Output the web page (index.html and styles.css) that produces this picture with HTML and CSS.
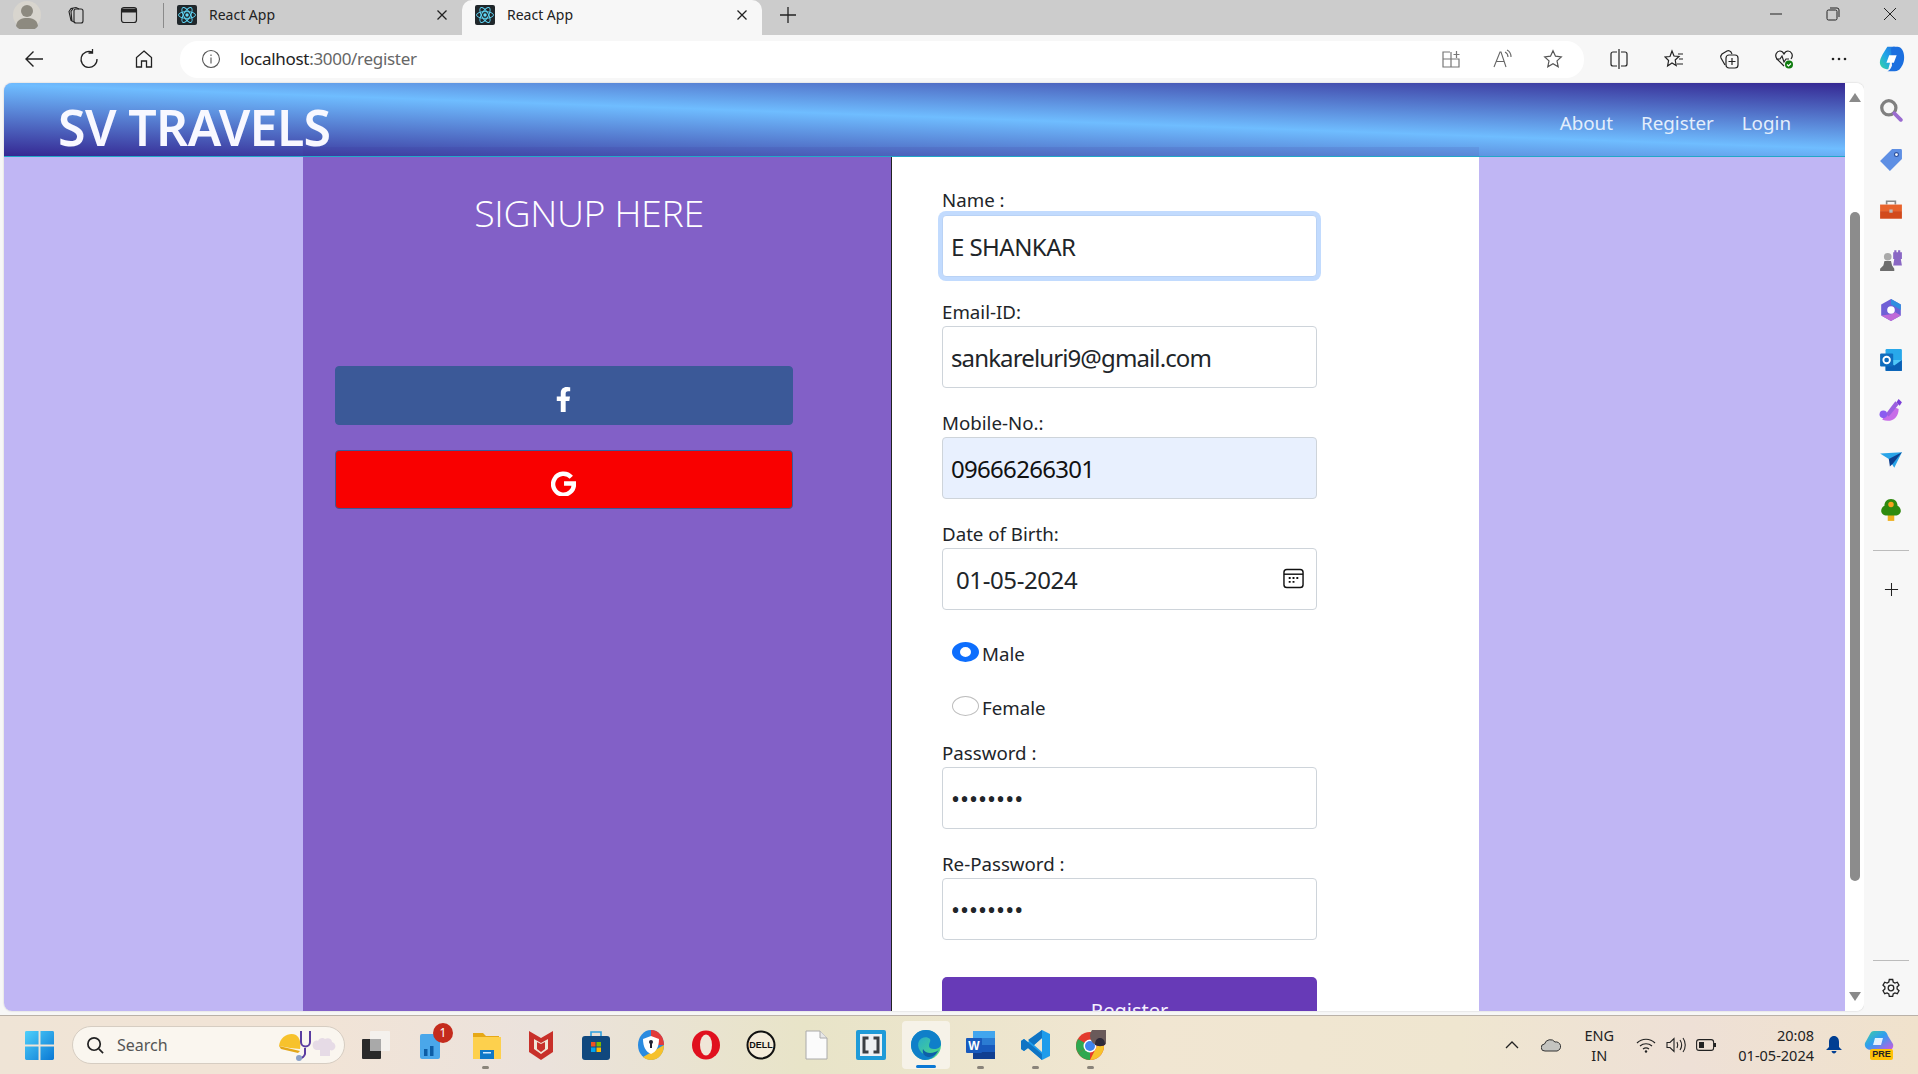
FILE: index.html
```html
<!DOCTYPE html>
<html lang="en">
<head>
<meta charset="utf-8">
<title>React App</title>
<link rel="stylesheet" href="styles.css">
</head>
<body>
<div class="screen">
  <div class="tabbar">
    <div class="tb-left">
      <svg class="avatar" viewBox="0 0 28 28"><circle cx="14" cy="14" r="14" fill="#d8d5ce"/><circle cx="14" cy="10" r="6" fill="#8d8a80"/><path d="M3 25c1-7 6-8 11-8s10 1 11 8a14 14 0 0 1-22 0z" fill="#8d8a80"/></svg>
      <svg class="ic20 tb-i1" viewBox="0 0 20 20" fill="none" stroke="#222" stroke-width="1.100"><rect x="8" y="4" width="9" height="14" rx="2"/><path d="M8 17l-3-1.500-2-9 2-3 5-1 3 1.500M6 16.500l-1-10 2-3"/></svg>
      <svg class="ic20 tb-i2" viewBox="0 0 20 20" fill="none" stroke="#222" stroke-width="1.200"><rect x="2.500" y="2.500" width="15" height="15" rx="2.500"/><path d="M3 4h14v3H3z" fill="#222"/></svg>
      <span class="tb-sep"></span>
    </div>
    <div class="tab">
      <svg class="favicon" viewBox="0 0 20 20"><rect width="20" height="20" rx="2" fill="#20272b"/><g fill="none" stroke="#61dafb" stroke-width=".9"><ellipse cx="10" cy="10" rx="8.500" ry="3.400"/><ellipse cx="10" cy="10" rx="8.500" ry="3.400" transform="rotate(60 10 10)"/><ellipse cx="10" cy="10" rx="8.500" ry="3.400" transform="rotate(120 10 10)"/></g><circle cx="10" cy="10" r="1.700" fill="#61dafb"/></svg>
      <span class="tab-title">React App</span>
      <svg class="tab-x" viewBox="0 0 12 12" stroke="#222" stroke-width="1.300"><path d="M1.500 1.500l9 9M10.500 1.500l-9 9"/></svg>
    </div>
    <div class="tab tab-active">
      <svg class="favicon" viewBox="0 0 20 20"><rect width="20" height="20" rx="2" fill="#20272b"/><g fill="none" stroke="#61dafb" stroke-width=".9"><ellipse cx="10" cy="10" rx="8.500" ry="3.400"/><ellipse cx="10" cy="10" rx="8.500" ry="3.400" transform="rotate(60 10 10)"/><ellipse cx="10" cy="10" rx="8.500" ry="3.400" transform="rotate(120 10 10)"/></g><circle cx="10" cy="10" r="1.700" fill="#61dafb"/></svg>
      <span class="tab-title">React App</span>
      <svg class="tab-x" viewBox="0 0 12 12" stroke="#222" stroke-width="1.300"><path d="M1.500 1.500l9 9M10.500 1.500l-9 9"/></svg>
    </div>
    <svg class="newtab" viewBox="0 0 18 18" stroke="#222" stroke-width="1.300"><path d="M9 1v16M1 9h16"/></svg>
    <div class="winctl">
      <svg class="ic14" viewBox="0 0 14 14" stroke="#222" stroke-width="1"><path d="M1 7h12"/></svg>
      <svg class="ic14" viewBox="0 0 14 14" fill="none" stroke="#222" stroke-width="1"><rect x="1" y="3" width="10" height="10" rx="1.500"/><path d="M4 1h7a2 2 0 0 1 2 2v7"/></svg>
      <svg class="ic14" viewBox="0 0 14 14" stroke="#222" stroke-width="1"><path d="M1 1l12 12M13 1L1 13"/></svg>
    </div>
  </div>

  <div class="toolbar">
    <div class="nav-btns">
      <svg class="ic20" viewBox="0 0 20 20" fill="none" stroke="#222" stroke-width="1.400"><path d="M19 10H2M9.500 2.500L2 10l7.500 7.500"/></svg>
      <svg class="ic20" viewBox="0 0 20 20" fill="none" stroke="#222" stroke-width="1.300"><path d="M13.500 3.200A8 8 0 1 0 18 10M13.500 0v4h-4"/></svg>
      <svg class="ic20" viewBox="0 0 20 20" fill="none" stroke="#222" stroke-width="1.300"><path d="M10 2l7.500 6.500V18h-5v-6h-5v6h-5V8.500z"/></svg>
    </div>
    <div class="addr">
      <svg class="ic20 addr-info" viewBox="0 0 20 20" fill="none" stroke="#555" stroke-width="1.100"><circle cx="10" cy="10" r="8.500"/><path d="M10 8.500v6M10 5.500v1.500"/></svg>
      <span class="url"><span class="url-host">localhost</span>:3000/register</span>
      <div class="addr-right">
        <svg class="ic20" viewBox="0 0 20 20" fill="none" stroke="#777" stroke-width="1.200"><path d="M9 3H2v15h16v-8H2M10 10v8M10 3v7M12.500 5.500h6M15.500 2v7"/></svg>
        <svg class="ic20" viewBox="0 0 20 20" fill="none" stroke="#666" stroke-width="1.100"><path d="M2 18L8 3h1l5 15M4.500 12.500h8M13 3c2 1 3 2.500 3 5M15 1c3 1.500 4 4 4 7"/></svg>
        <svg class="ic20" viewBox="0 0 20 20" fill="none" stroke="#555" stroke-width="1.200"><path d="M10 1.800l2.500 5.400 5.800.7-4.300 4 1.200 5.800-5.200-3-5.200 3L6 11.900l-4.300-4 5.800-.7z"/></svg>
      </div>
    </div>
    <div class="tools">
      <svg class="ic20" viewBox="0 0 20 20" fill="none" stroke="#222" stroke-width="1.200"><path d="M8 3H4a2 2 0 0 0-2 2v10a2 2 0 0 0 2 2h4M12 3h4a2 2 0 0 1 2 2v10a2 2 0 0 1-2 2h-4M10 0v20"/></svg>
      <svg class="ic20" viewBox="0 0 20 20" fill="none" stroke="#222" stroke-width="1.200"><path d="M8 2l2 5 5 .5-3.800 3.500 1 5.500L8 14l-4.400 3 1-5.500L1 8l5-.5zM14 5h5M15 10h4M13 15h6"/></svg>
      <svg class="ic20" viewBox="0 0 20 20" fill="none" stroke="#222" stroke-width="1.200"><path d="M6 16L2 9c-1-2 0-3 1-4l5-3c2-1 3 0 4 1l1 2"/><rect x="7" y="6" width="12" height="13" rx="3"/><path d="M13 9v7M9.500 12.500h7"/></svg>
      <svg class="ic20" viewBox="0 0 20 20" fill="none" stroke="#222" stroke-width="1.200"><path d="M10 17L3 10C0 6 3 2 6 2c2 0 3 1 4 3 1-2 2-3 4-3 3 0 6 4 3 8M2 10h4l2-3 2 6 2-3h3"/><circle cx="15" cy="15.500" r="4" fill="#107c10" stroke="none"/><path d="M13 15.500l1.500 1.500 2.500-2.500" stroke="#fff"/></svg>
      <svg class="ic20" viewBox="0 0 20 20" fill="#222"><circle cx="4" cy="10" r="1.300"/><circle cx="10" cy="10" r="1.300"/><circle cx="16" cy="10" r="1.300"/></svg>
      <svg class="copilot" viewBox="0 0 30 30"><defs><linearGradient id="cp1" x1="0" y1="1" x2="1" y2="0"><stop offset="0" stop-color="#37d6a0"/><stop offset=".5" stop-color="#1fa5e8"/><stop offset="1" stop-color="#2470e0"/></linearGradient></defs><path d="M10 2h8l-4 13-3 11c-5 0-9-3-9-7 0-3 1-5 3-9z" fill="url(#cp1)"/><path d="M14 4c1-2 2-2 4-2h3c4 0 7 5 7 11s-2 9-4 12c-1 2-3 3-6 3h-8c2 0 4-3 5-6z" fill="#1b6fdf"/><path d="M12 11h8l-3 8H9z" fill="#fff"/></svg>
    </div>
  </div>

  <div class="viewport">
    <div class="page">
      <main class="site">
        <header class="site-head">
          <h1 class="brand">SV TRAVELS</h1>
          <nav class="site-nav"><a>About</a><a>Register</a><a>Login</a></nav>
        </header>
        <div class="site-body">
          <div class="card">
            <section class="signup">
              <h2 class="signup-title">SIGNUP HERE</h2>
              <button class="social social-fb" type="button" aria-label="Facebook">
                <svg class="soc-ic" viewBox="0 0 320 512" fill="#fff"><path d="M279 288l14-93h-89v-60c0-25 12-50 52-50h41V6s-37-6-72-6c-73 0-121 44-121 125v70H22v93h82v224h100V288z"/></svg>
              </button>
              <button class="social social-g" type="button" aria-label="Google">
                <svg class="soc-ic" viewBox="0 0 24 24" fill="none" stroke="#fff" stroke-width="4.200"><path d="M19.500 6A10 10 0 1 0 22 12H12.500"/></svg>
              </button>
            </section>
            <form class="form">
              <label class="lbl lbl-first">Name :</label>
              <input class="field field-focus" type="text" value="E SHANKAR">
              <label class="lbl">Email-ID:</label>
              <input class="field field-email" type="text" value="sankareluri9@gmail.com">
              <label class="lbl">Mobile-No.:</label>
              <input class="field field-auto" type="text" value="09666266301">
              <label class="lbl">Date of Birth:</label>
              <div class="date-wrap">
                <input class="field field-date" type="text" value="01-05-2024">
                <svg class="cal" viewBox="0 0 22 22" fill="none" stroke="#111" stroke-width="1.500"><rect x="1" y="1.500" width="20" height="19" rx="3"/><path d="M1 6.500h20"/><path d="M6 10.500h2M10 10.500h2M14 10.500h2M6 14.500h2M10 14.500h2" stroke-width="2"/></svg>
              </div>
              <div class="radios">
                <div class="radio-row"><span class="radio radio-on"></span><span class="radio-text">Male</span></div>
                <div class="radio-row"><span class="radio"></span><span class="radio-text">Female</span></div>
              </div>
              <label class="lbl">Password :</label>
              <input class="field field-pw" type="password" value="password">
              <label class="lbl">Re-Password :</label>
              <input class="field field-pw" type="password" value="password">
              <button class="submit" type="button">Register</button>
            </form>
          </div>
        </div>
      </main>
      <div class="scroll">
        <span class="arrow-up"></span>
        <span class="thumb"></span>
        <span class="arrow-down"></span>
      </div>
    </div>
    <aside class="rail">
      <svg class="rail-i" viewBox="0 0 22 22" fill="none"><circle cx="9" cy="9" r="6.500" stroke="#808080" stroke-width="3"/><path d="M14 14l6 6" stroke="#9a6bd0" stroke-width="3.500" stroke-linecap="round"/></svg>
      <svg class="rail-i" viewBox="0 0 22 22"><path d="M12 1h8a1 1 0 0 1 1 1v8L10 21 1 12z" fill="#5e8fe4"/><circle cx="16" cy="6" r="1.800" fill="#fff" stroke="#2a4f9e"/></svg>
      <svg class="rail-i" viewBox="0 0 22 22"><path d="M7 6V3h8v3" fill="none" stroke="#888" stroke-width="1.500"/><rect x="1" y="6" width="20" height="6" fill="#e8632c"/><rect x="1" y="12" width="20" height="7" fill="#d24a1c"/><rect x="9.500" y="10.500" width="3" height="3" fill="#bbb"/></svg>
      <svg class="rail-i" viewBox="0 0 22 22"><path d="M14 2h2v2h1.500V2h2v2H21v6h-1l1 6h-8l1-6h-1V4h1z" fill="#8a67c4"/><circle cx="8" cy="8" r="3.500" fill="#aaa"/><path d="M5 12h6l1 4 2 3v2H1v-2l3-3z" fill="#6d6d6d"/></svg>
      <svg class="rail-i" viewBox="0 0 22 22"><path d="M11 1l9 5v10l-9 5-9-5V6z" fill="#6f5fd6"/><path d="M11 1l9 5v5l-5-3-4-2z" fill="#2f8fe0"/><path d="M2 16l9 5 9-5-5-3-4 2z" fill="#c06ad8"/><circle cx="11" cy="11" r="3.500" fill="#fff"/></svg>
      <svg class="rail-i" viewBox="0 0 22 22"><rect x="6" y="1" width="15" height="20" rx="1" fill="#28a8ea"/><path d="M6 11h15v10H6z" fill="#0a5fb4"/><path d="M6 11l8 5 7-5" fill="#50c8f8"/><rect x="1" y="5" width="12" height="12" rx="1" fill="#0f6cbd"/><circle cx="7" cy="11" r="3" fill="none" stroke="#fff" stroke-width="1.700"/></svg>
      <svg class="rail-i" viewBox="0 0 22 22"><path d="M3 20c9 3 15-2 15-10l-5-2c0 5-3 8-8 8z" fill="#c86de8"/><path d="M6 15L15 3l3 3-9 11z" fill="#9b5fe0"/><circle cx="4" cy="15" r="3.500" fill="#8b5cf0"/><path d="M18 1l3 3-2 3-3-3z" fill="#7c3fd8"/></svg>
      <svg class="rail-i" viewBox="0 0 22 22"><path d="M1 5l20-1-7 14-5-8z" fill="#29a4e8"/><path d="M9 10L21 4l-8 10-3 3z" fill="#0c3f8f"/></svg>
      <svg class="rail-i" viewBox="0 0 22 22"><rect x="8" y="15" width="6" height="6" fill="#eeb020"/><path d="M11 1c4 0 6 3 6 6 2 1 3 3 3 5 0 2-2 4-4 4H6c-2 0-4-2-4-4s1-4 3-5c0-3 2-6 6-6z" fill="#2f8a0f"/><circle cx="11" cy="6" r="2.500" fill="#f8a020"/></svg>
      <span class="rail-sep"></span>
      <svg class="rail-plus" viewBox="0 0 16 16" stroke="#222" stroke-width="1.100"><path d="M8 1v14M1 8h14"/></svg>
      <span class="rail-fill"></span>
      <span class="rail-sep rail-sep2"></span>
      <svg class="rail-gear" viewBox="0 0 20 20" fill="none" stroke="#222" stroke-width="1.300"><circle cx="10" cy="10" r="2.800"/><path d="M8.300 1.500h3.400l.5 2.500 1.700 1 2.400-.8 1.700 3-1.900 1.700v2.100l1.900 1.700-1.700 3-2.400-.8-1.700 1-.5 2.500H8.300l-.5-2.500-1.700-1-2.400.8-1.700-3 1.900-1.700V8.900L2 7.200l1.700-3 2.400.8 1.700-1z"/></svg>
    </aside>
  </div>

  <footer class="taskbar">
    <svg class="win" viewBox="0 0 30 30"><defs><linearGradient id="w1" x1="0" y1="0" x2="1" y2="1"><stop offset="0" stop-color="#4fd0fb"/><stop offset="1" stop-color="#0a78d4"/></linearGradient></defs><path d="M0 1.500A1.500 1.500 0 0 1 1.500 0H14v14H0zM16 0h12.500A1.500 1.500 0 0 1 30 1.500V14H16zM0 16h14v14H1.500A1.500 1.500 0 0 1 0 28.500zM16 16h14v12.500a1.500 1.500 0 0 1-1.500 1.500H16z" fill="url(#w1)"/></svg>
    <div class="search">
      <svg class="search-i" viewBox="0 0 20 20" fill="none" stroke="#222" stroke-width="1.800"><circle cx="8.500" cy="8.500" r="6.500"/><path d="M13.500 13.500L18 18"/></svg>
      <span class="search-t">Search</span>
      <svg class="search-art" viewBox="0 0 62 34"><path d="M1 18C2 8 12 4 18 7c4 3 5 8 4 14l-10-1z" fill="#f7c22c"/><path d="M1 18l21 5-2 2L3 21z" fill="#e3a617"/><path d="M23 3v11c0 6 9 6 9 0V3" fill="none" stroke="#5a3ca0" stroke-width="2"/><path d="M27 20v6c-1 3-3 4-5 4" fill="none" stroke="#5a3ca0" stroke-width="2"/><circle cx="21" cy="30" r="3" fill="#8aa0c8"/><path d="M38 22c-3-1-4-4-3-7 1-2 3-3 5-2 1-3 5-4 7-2 3-2 7 0 7 3 3 1 4 4 3 6-1 2-3 3-5 2v6H42v-6z" fill="#e6dbe6"/></svg>
    </div>
    <div class="apps">
      <span class="app"><svg viewBox="0 0 30 30"><rect x="1" y="9" width="19" height="20" rx="1" fill="#2a2a2a"/><rect x="9" y="1" width="20" height="20" rx="1" fill="#f4f2ef" opacity=".9"/><rect x="9" y="9" width="11" height="12" fill="#a9a9a9"/></svg></span>
      <span class="app"><svg viewBox="0 0 30 30"><rect x="4" y="4" width="20" height="25" rx="2" fill="#4aa7ea"/><rect x="8" y="19" width="3.500" height="7" fill="#0c5da5"/><rect x="14" y="16" width="3.500" height="10" fill="#0c5da5"/></svg><b class="badge">1</b></span>
      <span class="app app-on"><svg viewBox="0 0 30 30"><path d="M2 3h10l3 3h13v23H2z" fill="#e6a817"/><rect x="2" y="7" width="28" height="22" fill="#fdd04d"/><rect x="9" y="20" width="14" height="9" fill="#0f78c8"/><rect x="12" y="22" width="8" height="1.500" fill="#cfe8ff"/></svg></span>
      <span class="app"><svg viewBox="0 0 30 30"><path d="M3 1l12 7 12-7v21l-12 8-12-8z" fill="#c8302a"/><path d="M8 9l7 4 7-4v10l-7 5-7-5z" fill="#f0e6d8"/><path d="M11 12l4 2 4-2v7l-4 3-4-3z" fill="#c8302a"/></svg></span>
      <span class="app"><svg viewBox="0 0 30 30"><path d="M10 7V2h10v5" fill="none" stroke="#2ea0e0" stroke-width="1.600"/><rect x="1" y="6" width="28" height="24" rx="3" fill="#10487e"/><rect x="10" y="12" width="4.500" height="4.500" fill="#f25022"/><rect x="15.500" y="12" width="4.500" height="4.500" fill="#7fba00"/><rect x="10" y="17.500" width="4.500" height="4.500" fill="#00a4ef"/><rect x="15.500" y="17.500" width="4.500" height="4.500" fill="#ffb900"/></svg></span>
      <span class="app"><svg viewBox="0 0 30 30"><ellipse cx="15" cy="15" rx="13" ry="15" fill="#2a8be0"/><path d="M15 0c7 0 13 6 13 15H15z" fill="#e23b3b"/><path d="M28 15c0 9-6 15-13 15-3 0-6-1-8-3z" fill="#f6c12c"/><path d="M7 9l8-3 8 3c0 8-3 13-8 15-5-2-8-7-8-15z" fill="#fff"/><circle cx="15" cy="12" r="2" fill="#223"/><rect x="14" y="13" width="2" height="5" fill="#223"/></svg></span>
      <span class="app"><svg viewBox="0 0 30 30"><ellipse cx="15" cy="15" rx="14" ry="14.500" fill="#e0101e"/><ellipse cx="15" cy="15" rx="6" ry="10.500" fill="#f0e6d8"/></svg></span>
      <span class="app"><svg viewBox="0 0 30 30"><circle cx="15" cy="15" r="13.500" fill="#f4ecda" stroke="#111" stroke-width="2"/><text class="dell-t" x="15" y="18">DELL</text></svg></span>
      <span class="app"><svg viewBox="0 0 30 30"><path d="M5 1h14l7 7v21H5z" fill="#fbfbfb" stroke="#aaa" stroke-width="1"/><path d="M19 1v7h7" fill="#e8e8e8" stroke="#aaa" stroke-width="1"/></svg></span>
      <span class="app"><svg viewBox="0 0 30 30"><rect width="30" height="30" rx="2" fill="#1f9bd8"/><rect x="4" y="4" width="22" height="22" fill="#eef1f3"/><path d="M12.500 8H8v14h4.500M17.500 8H22v14h-4.500" fill="none" stroke="#3a3f44" stroke-width="3"/></svg></span>
      <span class="app app-edge"><svg viewBox="0 0 30 30"><defs><linearGradient id="e1" x1="0" y1="0" x2="1" y2="1"><stop offset="0" stop-color="#1b9de2"/><stop offset="1" stop-color="#54e07a"/></linearGradient></defs><circle cx="15" cy="15" r="15" fill="url(#e1)"/><path d="M0 15C0 6 7 0 15 0c8 0 15 6 15 14 0 3-3 5-7 5-3 0-5-1-5-3 0-4 2-4 1-7-3-3-9-2-11 2-3 6 2 14 9 14 5 0 7-1 9-3-2 5-7 8-12 8C7 30 0 23 0 15z" fill="#0f7fc9"/><path d="M12 19c2 4 7 5 12 3 2-1 3-1 4-3-2 6-7 8-11 8-4-1-6-4-5-8z" fill="#0d5fa8"/></svg></span>
      <span class="app app-on"><svg viewBox="0 0 30 30"><rect x="7" y="1" width="22" height="28" rx="1.500" fill="#2b7cd3"/><rect x="7" y="1" width="22" height="7" fill="#41a5ee"/><rect x="7" y="15" width="22" height="7" fill="#185abd"/><rect x="7" y="22" width="22" height="7" fill="#103f91"/><rect x="0" y="8" width="16" height="15" rx="1" fill="#185abd"/><text class="word-t" x="8" y="20">W</text></svg></span>
      <span class="app app-on"><svg viewBox="0 0 30 30"><path d="M21 0l8 4v22l-8 4-14-12-4 3-3-2v-8l3-2 4 3zM21 8l-8 7 8 7z" fill="#1e9ceb"/><path d="M21 0v8l-8 7-6-5 14-10zM0 11l3-2 18 15v6L7 18l-4 3-3-2z" fill="#0f74c4"/></svg></span>
      <span class="app app-on"><svg class="chrome" viewBox="0 0 30 30"><circle cx="14" cy="16" r="14" fill="#e33b2e"/><path d="M14 16L2 23a14 14 0 0 0 12 7z" fill="#2fa84f"/><path d="M14 16l-12 7a14 14 0 0 1 0-14z" fill="#2fa84f"/><path d="M14 16h14a14 14 0 0 1-14 14l7-14z" fill="#f7c22c"/><circle cx="14" cy="16" r="6.500" fill="#fff"/><circle cx="14" cy="16" r="5" fill="#3f84ee"/><circle cx="24" cy="6" r="10" fill="#6a5a5a"/><path d="M19 15c0-5 2-7 5-7s5 2 5 7c-3 1.500-7 1.500-10 0z" fill="#2e2a38"/></svg></span>
    </div>
    <div class="tray">
      <svg class="tray-chev" viewBox="0 0 14 8" fill="none" stroke="#222" stroke-width="1.300"><path d="M1 7l6-6 6 6"/></svg>
      <svg class="tray-cloud" viewBox="0 0 20 14"><path d="M4 13a3.500 3.500 0 0 1-.5-7A6 6 0 0 1 14 4a4.500 4.500 0 0 1 2 9z" fill="#c4c4c0" stroke="#333" stroke-width="1"/></svg>
      <div class="tray-lang"><span>ENG</span><span>IN</span></div>
      <svg class="tray-wifi" viewBox="0 0 20 15" fill="none" stroke="#222" stroke-width="1.200"><path d="M1 5c5-5 13-5 18 0M4 8c3.500-3 8.500-3 12 0M7 11c2-1.500 4-1.500 6 0"/><circle cx="10" cy="13.500" r="1.200" fill="#222" stroke="none"/></svg>
      <svg class="tray-vol" viewBox="0 0 20 16" fill="none" stroke="#222" stroke-width="1.100"><path d="M1 5.500v5h3l4 4V1.500l-4 4zM11 5c1 2 1 4 0 6M14 3c2 3 2 7 0 10M17 1c3 4 3 10 0 14"/></svg>
      <svg class="tray-bat" viewBox="0 0 21 12" fill="none" stroke="#222" stroke-width="1.100"><rect x=".6" y=".6" width="17" height="10.800" rx="2.500"/><rect x="3" y="3" width="5" height="6" fill="#222" stroke="none"/><path d="M19 4v4" stroke-width="2"/></svg>
      <div class="tray-time"><span>20:08</span><span>01-05-2024</span></div>
      <svg class="tray-bell" viewBox="0 0 16 18" fill="#003e92"><path d="M8 0c3 0 5 2.500 5 6v5l3 3H0l3-3V6c0-3.500 2-6 5-6zM5.500 15h5c-.3 1.500-1.200 2.500-2.500 2.500S5.800 16.500 5.500 15z"/></svg>
      <span class="tray-cop">
        <svg viewBox="0 0 30 24"><defs><linearGradient id="t1" x1="0" y1="0" x2="1" y2="1"><stop offset="0" stop-color="#3fd0a0"/><stop offset=".45" stop-color="#2f9df0"/><stop offset="1" stop-color="#d058e0"/></linearGradient></defs><path d="M10 1h9c3 0 4 2 5 5l5 8c1 3-1 6-4 6H7c-4 0-7-3-6-7L6 4c1-2 2-3 4-3z" fill="url(#t1)"/><path d="M11 8h8l-2 7H9z" fill="#fff" opacity=".85"/></svg>
        <b class="pre">PRE</b>
      </span>
    </div>
  </footer>
</div>
</body>
</html>
```

FILE: styles.css
```css
* { box-sizing: border-box; }
html, body { margin: 0; padding: 0; height: 100%; overflow: hidden; }
body { font-family: "Noto Sans", "Open Sans", sans-serif; color: #212529; background: #f7f7f7; }
svg { display: block; flex: none; }

.screen { width: 1918px; height: 1074px; display: grid; grid-template-rows: 35px 48px 932px 59px; }

/* browser tabs */
.tabbar { background: #cccccc; display: flex; align-items: center; }
.tb-left { width: 175px; display: flex; align-items: center; padding: 0 0 5px 13px; flex: none; }
.avatar { width: 28px; height: 28px; }
.ic20 { width: 20px; height: 20px; }
.ic14 { width: 14px; height: 14px; }
.tb-i1 { margin-left: 25px; }
.tb-i2 { margin-left: 33px; }
.tb-sep { width: 1px; height: 25px; background: #8a8a8a; margin-left: 24px; }
.tab { height: 35px; display: flex; align-items: center; width: 287px; padding: 0 0 5px 2px; flex: none; }
.tab-active { width: 300px; background: #f7f7f7; border-radius: 10px 10px 0 0; padding-left: 13px; }
.favicon { width: 20px; height: 20px; }
.tab-title { font-size: 14px; margin: -2px 0 0 12px; color: #222; flex: 1; }
.tab-x { width: 12px; height: 12px; margin-right: 14px; }
.newtab { width: 18px; height: 18px; margin: 0 0 5px 17px; }
.winctl { margin-left: auto; display: flex; gap: 43px; padding: 0 21px 7px 0; }

/* browser toolbar */
.toolbar { background: #f7f7f7; display: flex; align-items: center; }
.nav-btns { width: 180px; display: flex; gap: 35px; padding-left: 24px; flex: none; }
.addr { width: 1404px; height: 37px; background: #fff; border-radius: 18px; display: flex; align-items: center; padding: 0 21px; flex: none; }
.addr-info { margin-right: 19px; }
.url { font-size: 17px; color: #666; letter-spacing: -.3px; margin-top: -2px; }
.url-host { color: #222; }
.addr-right { margin-left: auto; display: flex; gap: 31px; }
.tools { display: flex; align-items: center; gap: 35px; padding-left: 25px; }
.copilot { width: 28px; height: 28px; margin-left: -6px; }

/* browser viewport */
.viewport { display: flex; min-height: 0; }
.page { margin-left: 4px; width: 1860px; height: 928px; display: flex; border-radius: 8px; overflow: hidden; background: #fff; box-shadow: 0 0 2px rgba(0,0,0,.2); flex: none; }
.site { width: 1841px; height: 100%; background: #c0b6f4; display: flex; flex-direction: column; flex: none; }
.site-head { height: 74px; flex: none; display: flex; justify-content: space-between; border-bottom: 1px solid #22a8c8; background: linear-gradient(182deg, #352792 0%, #6fbdff 48%, #352792 100%); padding: 0 54px 0 54px; }
.brand { margin: 10px 0 0; font-size: 50px; line-height: 68px; font-weight: 600; color: #f8f8ff; white-space: nowrap; letter-spacing: -.6px; height: 63px; }
.site-nav { display: flex; gap: 28px; align-items: center; margin-top: 7px; }
.site-nav a { font-size: 18.800px; color: #e3eefc; }
.site-body { flex: 1; min-height: 0; padding: 0 366px 0 299px; }
.card { position: relative; height: 100%; display: flex; }
.card::before { content: ""; position: absolute; left: 0; right: 0; top: -10px; height: 9px; background: rgba(60, 40, 140, .1); }

/* left panel */
.signup { width: 589px; flex: none; background: #8260c7; border-right: 1px solid #222; padding: 31px 0 0 32px; }
.signup-title { margin: 0 0 128px; font-size: 37.500px; line-height: 50px; font-weight: 300; font-family: "Open Sans", sans-serif; color: #fff; text-align: center; padding-right: 48px; letter-spacing: -.35px; }
.social { display: flex; align-items: center; justify-content: center; width: 458px; height: 59px; border-radius: 4px; margin-bottom: 25px; border: 1px solid #3b5998; padding: 7px 2px 0 0; }
.social-fb { background: #3b5998; }
.social-g { background: #f90000; }
.soc-ic { height: 25px; width: 25px; }

/* right panel */
.form { width: 587px; flex: none; background: #fff; padding: 32px 0 0 50px; }
.lbl { display: block; width: 375px; font-size: 18.700px; line-height: 24px; margin-bottom: 2px; color: #212529; }
.lbl-first { margin-top: -1px; margin-bottom: 3px; }
.field { display: block; width: 375px; height: 62px; padding: 6px 8px; margin-bottom: 23px; border: 1px solid #ced4da; border-radius: 4px; font: 400 24px "Noto Sans", sans-serif; letter-spacing: -.55px; color: #212529; background: #fff; outline: none; }
.field-focus { border-color: #b9d2f5; box-shadow: 0 0 0 4px #c2dbfe; }
.field-email { letter-spacing: -.88px; }
.field-auto { background: #e8f0fe; color: #111; letter-spacing: -.7px; }
.field-date { padding-left: 13px; margin-bottom: 0; letter-spacing: -.4px; }
.field-pw { letter-spacing: 0; }
.date-wrap { position: relative; width: 375px; }
.cal { position: absolute; right: 13px; top: 20px; width: 21px; height: 21px; }
.radios { margin: 16px 0 7px; }
.radio-row { height: 54px; display: flex; align-items: center; padding-left: 10px; }
.radio { width: 27px; height: 20px; border-radius: 50%; border: 1px solid #bdbdbd; background: #fff; flex: none; margin-top: -2px; }
.radio-on { border-color: #0d6efd; border-width: 5px 8px; }
.radio-text { font-size: 18.700px; margin-left: 3px; }
.submit { display: block; margin-top: 37px; width: 375px; height: 62px; border: 0; border-radius: 5px; background: #673ab7; color: #f6f1ff; font: 400 20px "Noto Sans", sans-serif; padding-top: 6px; }

/* scrollbar */
.scroll { width: 19px; background: #fff; display: flex; flex-direction: column; align-items: center; padding-top: 10px; flex: none; }
.arrow-up { width: 0; height: 0; border-left: 6px solid transparent; border-right: 6px solid transparent; border-bottom: 9px solid #8a8a8a; flex: none; }
.arrow-down { width: 0; height: 0; border-left: 6px solid transparent; border-right: 6px solid transparent; border-top: 9px solid #8a8a8a; flex: none; margin-top: 111px; }
.thumb { width: 10px; height: 669px; background: #8c8c8c; border-radius: 5px; margin-top: 110px; flex: none; }

/* edge side rail */
.rail { flex: 1; background: #f7f7f7; display: flex; flex-direction: column; align-items: center; padding: 15px 0 0; }
.rail-i { width: 24px; height: 24px; margin-bottom: 26px; }
.rail-sep { width: 36px; height: 1px; background: #bcbcbc; margin-top: 2px; }
.rail-plus { width: 15px; height: 15px; margin-top: 31px; }
.rail-fill { flex: 1; }
.rail-sep2 { margin: 0 0 17px; }
.rail-gear { width: 20px; height: 20px; margin-bottom: 17px; }

/* windows taskbar */
.taskbar { border-top: 1px solid #b9b1a8; background: linear-gradient(90deg, #efe4d6 0%, #f2e4d6 16%, #ebe2dc 28%, #e8e4c8 42%, #f1e6d2 60%, #efe6d0 76%, #eee0d6 88%, #f0e2cc 100%); display: flex; align-items: center; padding-left: 25px; }
.win { width: 29px; height: 29px; }
.search { width: 273px; height: 38px; margin-left: 18px; border-radius: 19px; background: #faf6ef; border: 1px solid #d6cdc2; display: flex; align-items: center; padding-left: 13px; flex: none; }
.search-i { width: 19px; height: 19px; }
.search-t { font-size: 16px; color: #555; margin-left: 12px; }
.search-art { width: 62px; height: 34px; margin-left: auto; margin-right: 4px; }
.apps { display: flex; margin-left: 3px; align-items: center; }
.app { width: 55px; height: 48px; display: flex; align-items: center; justify-content: center; position: relative; flex: none; }
.app svg { width: 30px; height: 30px; }
.app-on::after { content: ""; position: absolute; left: 24px; bottom: 0; width: 7px; height: 3px; border-radius: 2px; background: #8a847a; }
.app-edge { width: 48px; margin: 0 3px 0 4px; background: #f6f2e8; border-radius: 4px; }
.app-edge::after { content: ""; position: absolute; left: 14px; bottom: 1px; width: 20px; height: 3px; border-radius: 2px; background: #0a78d4; }
.badge { position: absolute; left: 30px; top: 2px; width: 20px; height: 20px; border-radius: 50%; background: #c42b1c; color: #fff; font: 400 12px/20px "Noto Sans", sans-serif; text-align: center; }
.dell-t { font: 700 9px "Liberation Sans", sans-serif; fill: #111; text-anchor: middle; }
.word-t { font: 700 12px "Liberation Sans", sans-serif; fill: #fff; text-anchor: middle; }

.tray { margin-left: auto; display: flex; align-items: center; }
.tray-chev { width: 14px; height: 8px; margin-right: 22px; }
.tray-cloud { width: 20px; height: 14px; margin-right: 18px; }
.tray-lang { display: flex; flex-direction: column; align-items: center; font-size: 14.500px; line-height: 20px; width: 40px; margin-right: 17px; color: #222; }
.tray-wifi { width: 20px; height: 15px; margin-right: 10px; }
.tray-vol { width: 20px; height: 16px; margin-right: 10px; }
.tray-bat { width: 21px; height: 12px; margin-right: 21px; }
.tray-time { display: flex; flex-direction: column; align-items: flex-end; font-size: 14.500px; line-height: 20px; color: #222; }
.tray-bell { width: 16px; height: 18px; margin-left: 12px; margin-right: 22px; }
.tray-cop { position: relative; width: 30px; height: 30px; margin-right: 24px; }
.tray-cop svg { width: 30px; height: 24px; }
.pre { position: absolute; left: 6px; top: 19px; width: 23px; height: 11px; border-radius: 2px; background: #ffc107; color: #222; font: 700 9px/11px "Liberation Sans", sans-serif; text-align: center; }
```
